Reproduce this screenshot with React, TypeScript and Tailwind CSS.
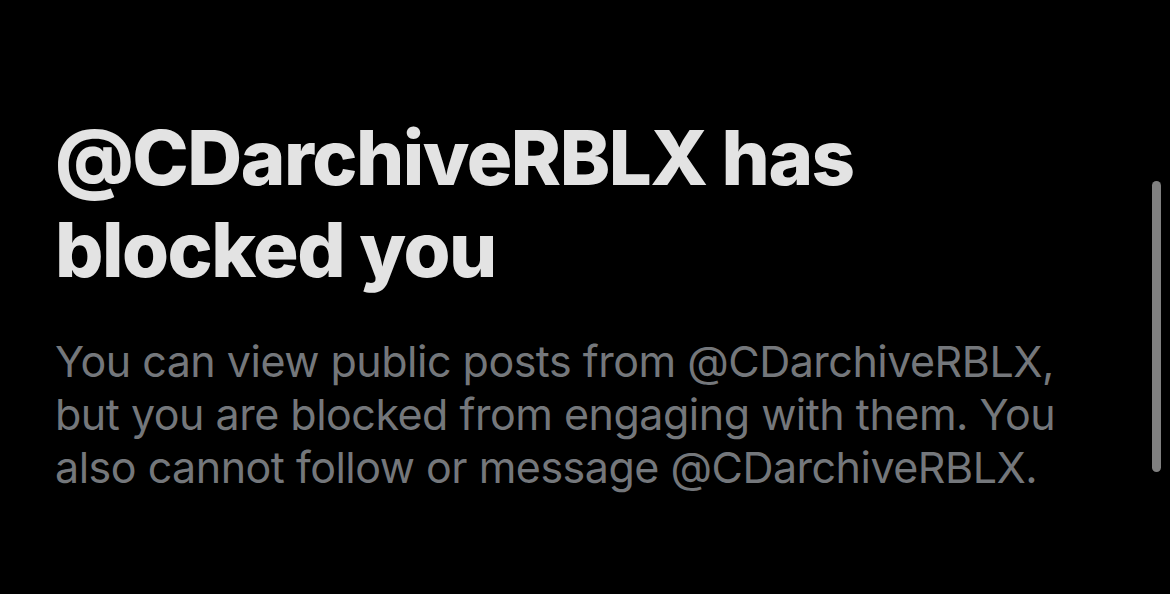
export default function App() {
  return (
    <div className="relative w-[1170px] h-[594px] bg-black overflow-hidden font-['Inter',sans-serif]">
      <div className="pl-[55px] pt-[111px]">
        <h1 className="text-[76px] leading-[92px] font-extrabold tracking-[-1.5px] text-[#e3e3e3] whitespace-nowrap">
          @CDarchiveRBLX has
          <br />
          blocked you
        </h1>
        <p className="mt-[40px] text-[43px] leading-[53px] tracking-[-0.5px] text-[#74777b] whitespace-nowrap">
          You can view public posts from @CDarchiveRBLX,
          <br />
          but you are blocked from engaging with them. You
          <br />
          also cannot follow or message @CDarchiveRBLX.
        </p>
      </div>
      {/* scroll indicator */}
      <div className="absolute left-[1152px] top-[181px] w-[9px] h-[291px] rounded-full bg-[#808080]" />
    </div>
  );
}
